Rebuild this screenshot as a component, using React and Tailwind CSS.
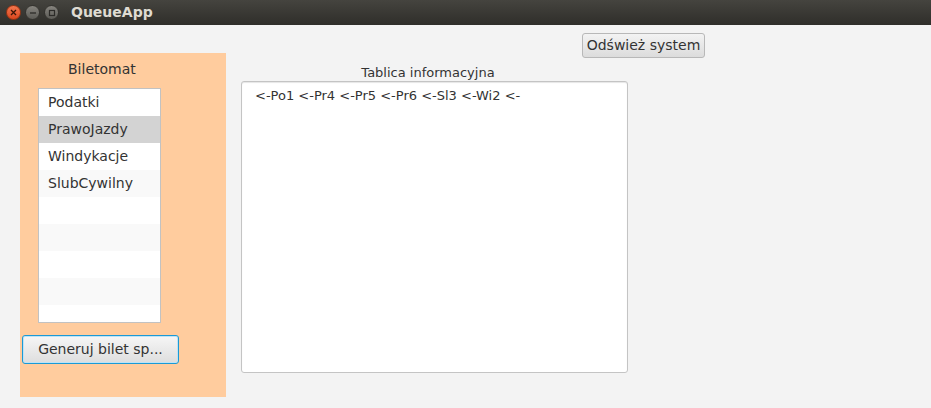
import React from 'react'

const services = ['Podatki', 'PrawoJazdy', 'Windykacje', 'SlubCywilny']

function WinButtons() {
  return (
    <div className="flex items-center gap-[4px] pl-[6px]">
      <div className="w-[15px] h-[15px] rounded-full bg-gradient-to-b from-[#f4764d] to-[#d9461c] border border-[#9a3413] flex items-center justify-center">
        <svg width="7" height="7" viewBox="0 0 7 7"><path d="M1 1L6 6M6 1L1 6" stroke="#3b1608" strokeWidth="1.3" /></svg>
      </div>
      <div className="w-[15px] h-[15px] rounded-full bg-gradient-to-b from-[#86847e] to-[#5c5b56] border border-[#34332f] flex items-center justify-center">
        <svg width="8" height="8" viewBox="0 0 8 8"><path d="M1 4H7" stroke="#2c2b28" strokeWidth="1.3" /></svg>
      </div>
      <div className="w-[15px] h-[15px] rounded-full bg-gradient-to-b from-[#86847e] to-[#5c5b56] border border-[#34332f] flex items-center justify-center">
        <svg width="8" height="8" viewBox="0 0 8 8"><rect x="1.5" y="1.5" width="5" height="5" fill="none" stroke="#2c2b28" strokeWidth="1.2" /></svg>
      </div>
    </div>
  )
}

export default function App() {
  const rows = [...services, '', '', '', '', '', '']
  return (
    <div className="w-[931px] h-[408px] overflow-hidden bg-[#f3f3f3] text-[#333333] font-['DejaVu_Sans',sans-serif]">
      {/* title bar */}
      <div className="h-[25px] flex items-center bg-gradient-to-b from-[#45443f] to-[#2f2e2a]">
        <WinButtons />
        <span className="ml-[12px] text-[14px] font-bold text-[#dfdbd2]">QueueApp</span>
      </div>

      <div className="flex items-start">
        {/* ticket machine */}
        <div className="ml-[20px] mt-[28px] w-[206px] h-[344px] bg-[#ffcc9e] flex flex-col">
          <div className="text-[14px] leading-[17px] mt-[8px] pl-[48px]">Biletomat</div>
          <div className="ml-[18px] mt-[10px] w-[123px] h-[235px] border border-[#c2c2c2] bg-white overflow-hidden">
            {rows.map((r, i) => (
              <div
                key={i}
                className={
                  'h-[27px] shrink-0 pl-[9px] text-[14px] leading-[27px] ' +
                  (i === 1 ? 'bg-[#d3d3d3]' : i % 2 === 1 ? 'bg-[#f9f9f9]' : 'bg-white')
                }
              >
                {r}
              </div>
            ))}
          </div>
          <button className="ml-[2px] mt-[12px] w-[157px] h-[29px] rounded-[3px] border border-[#1b9ad6] shadow-[inset_0_0_0_1px_#bfe3f5] bg-gradient-to-b from-[#f6f6f6] to-[#dedede] text-[14px] text-[#333333]">
            Generuj bilet sp...
          </button>
        </div>

        {/* info board */}
        <div className="ml-[15px] mt-[8px] w-[464px] flex flex-col">
          <button className="self-end w-[123px] h-[25px] rounded-[3px] border border-[#b8b8b8] bg-gradient-to-b from-[#f3f3f3] to-[#dcdcdc] text-[14px] text-[#333333] leading-[23px]">
            Odśwież system
          </button>
          <div className="w-[387px] mt-[7px] pr-[13px] text-center text-[13px] leading-[16px]">Tablica informacyjna</div>
          <div className="w-[387px] h-[292px] rounded-[3px] border border-[#c4c4c4] bg-white shadow-[inset_0_1px_1px_#e6e6e6] px-[13px] pt-[6px] text-[13px] leading-[16px]">
            &lt;-Po1 &lt;-Pr4 &lt;-Pr5 &lt;-Pr6 &lt;-Sl3 &lt;-Wi2 &lt;-
          </div>
        </div>
      </div>
    </div>
  )
}
